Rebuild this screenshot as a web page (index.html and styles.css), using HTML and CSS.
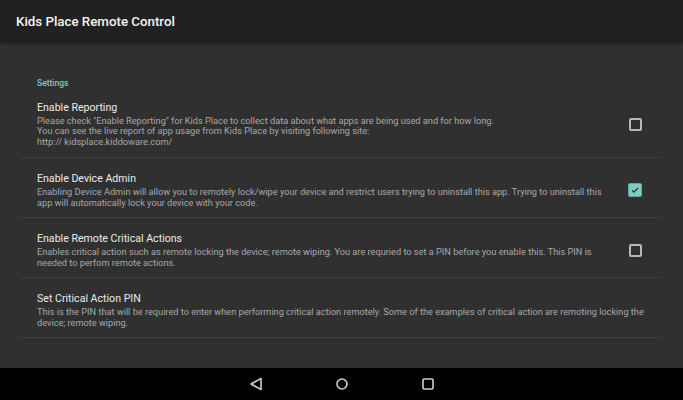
FILE: index.html
```html
<!DOCTYPE html>
<html lang="en">
<head>
  <meta charset="UTF-8" />
  <meta name="viewport" content="width=device-width, initial-scale=1.0"/>
  <title>Kids Place Remote Control</title>
  <link rel="stylesheet" href="styles.css">
</head>
<body>

  <div class="toolbar">Kids Place Remote Control</div>

  <div class="content">
    <div class="category">Settings</div>

    <div class="pref">
      <div class="pref-text">
        <div class="pref-title">Enable Reporting</div>
        <div class="pref-summary">Please check "Enable Reporting" for Kids Place to collect data about what apps are being used and for how long.<br>You can see the live report of app usage from Kids Place by visiting following site:<br>http:// kidsplace.kiddoware.com/</div>
      </div>
      <div class="pref-widget"><span class="checkbox"></span></div>
    </div>

    <div class="pref">
      <div class="pref-text">
        <div class="pref-title">Enable Device Admin</div>
        <div class="pref-summary">Enabling Device Admin will allow you to remotely lock/wipe your device and restrict users trying to uninstall this app. Trying to uninstall this app will automatically lock your device with your code.</div>
      </div>
      <div class="pref-widget">
        <span class="checkbox checked">
          <svg viewBox="0 0 14 14" width="14" height="14"><path d="M3.5 7.2l2.3 2.3 4.7-4.9" fill="none" stroke="#263238" stroke-width="1.6"/></svg>
        </span>
      </div>
    </div>

    <div class="pref">
      <div class="pref-text">
        <div class="pref-title">Enable Remote Critical Actions</div>
        <div class="pref-summary">Enables critical action such as remote locking the device; remote wiping. You are requried to set a PIN before you enable this. This PIN is needed to perfom remote actions.</div>
      </div>
      <div class="pref-widget"><span class="checkbox"></span></div>
    </div>

    <div class="pref">
      <div class="pref-text wide">
        <div class="pref-title">Set Critical Action PIN</div>
        <div class="pref-summary">This is the PIN that will be required to enter when performing critical action remotely. Some of the examples of critical action are remoting locking the device; remote wiping.</div>
      </div>
    </div>
  </div>

  <div class="navbar">
    <svg class="nav-icon" viewBox="0 0 14 14" width="14" height="14"><path d="M12 1.5v11L2 7z" fill="none" stroke="#d0d0d0" stroke-width="1.6" stroke-linejoin="round"/></svg>
    <svg class="nav-icon" viewBox="0 0 14 14" width="14" height="14"><circle cx="7" cy="7" r="5" fill="none" stroke="#d0d0d0" stroke-width="1.6"/></svg>
    <svg class="nav-icon" viewBox="0 0 14 14" width="14" height="14"><rect x="2" y="2" width="10" height="10" rx="1" fill="none" stroke="#d0d0d0" stroke-width="1.6"/></svg>
  </div>

</body>
</html>
```

FILE: styles.css
```css
* {
  box-sizing: border-box;
}

body {
  margin: 0;
  width: 683px;
  height: 400px;
  overflow: hidden;
  font-family: Roboto, 'Liberation Sans', sans-serif;
  background-color: #303030;
  color: #fff;
  display: flex;
  flex-direction: column;
}

.toolbar {
  height: 43px;
  background: #212121;
  padding-left: 16px;
  display: flex;
  align-items: center;
  font-size: 13.3px;
  font-weight: 500;
  color: #f5f5f5;
  box-shadow: 0 1px 3px rgba(0,0,0,0.35);
  position: relative;
  z-index: 1;
}

.content {
  flex: 1;
  padding: 35px 22px 0 21px;
}

.category {
  font-size: 8.5px;
  font-weight: 500;
  color: #80cbc4;
  padding-left: 16px;
  margin-bottom: 5px;
}

.pref {
  display: flex;
  align-items: center;
  border-bottom: 1px solid #3f3f3f;
  padding: 0 0 0 16px;
}

.pref:nth-of-type(2) {
  height: 65px;
  padding-bottom: 2px;
}

.pref:nth-of-type(3),
.pref:nth-of-type(4),
.pref:nth-of-type(5) {
  height: 60px;
  padding-top: 5px;
}

.pref-text {
  flex: 1;
  padding-right: 8px;
  max-width: 592px;
}

.pref-text.wide {
  max-width: 626px;
}

.pref-title {
  font-size: 10.6px;
  color: #ececec;
  line-height: 14px;
  margin-bottom: 1px;
}

.pref-summary {
  font-size: 9.2px;
  line-height: 10.5px;
  color: #a8a8a8;
}

.pref-widget {
  width: 48px;
  display: flex;
  justify-content: center;
  margin-left: auto;
  padding-right: 4px;
}

.checkbox {
  width: 13px;
  height: 13px;
  border: 2px solid #b8b8b8;
  border-radius: 2px;
  display: inline-block;
}

.checkbox.checked {
  width: 14px;
  height: 14px;
  border: 1px solid #5fa9a2;
  background: #80cbc4;
  display: flex;
  align-items: center;
  justify-content: center;
}

.checkbox.checked svg {
  width: 12px;
  height: 12px;
}

.navbar {
  height: 32px;
  background: #000;
  display: flex;
  align-items: center;
  justify-content: center;
  gap: 72px;
}

.nav-icon {
  width: 14px;
  height: 14px;
}
```
